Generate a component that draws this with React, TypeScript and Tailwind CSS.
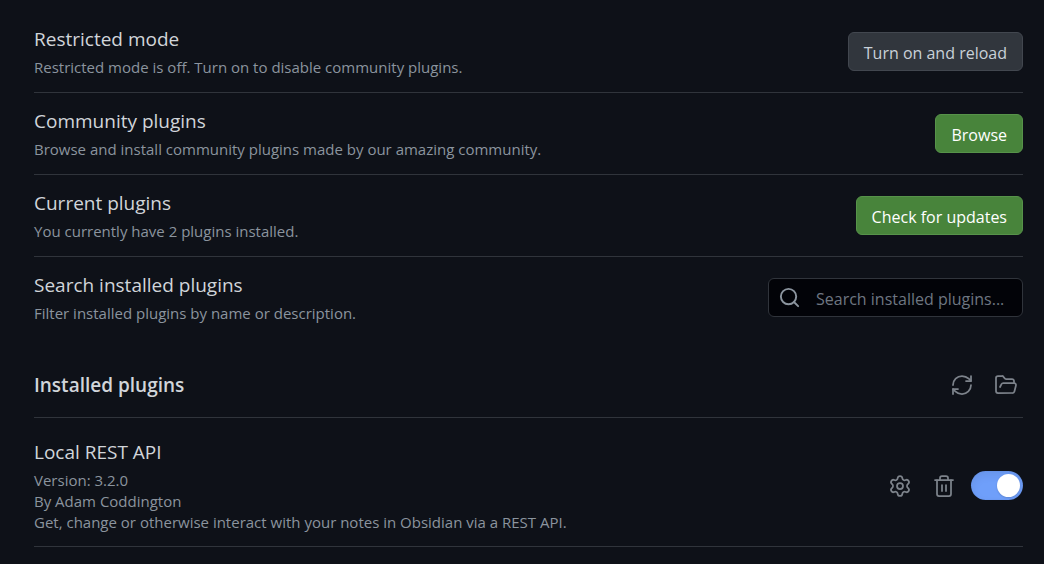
import { useState, type ReactNode } from "react";
import { FolderOpen, RefreshCw, Search, Settings } from "lucide-react";

function Trash() {
  return (
    <svg
      className="size-6"
      viewBox="0 0 24 24"
      fill="none"
      stroke="currentColor"
      strokeWidth="1.75"
      strokeLinecap="round"
      strokeLinejoin="round"
      aria-hidden="true"
    >
      <path d="M3 6h18" />
      <path d="M19 6v14c0 1-1 2-2 2H7c-1 0-2-1-2-2V6" />
      <path d="M8 6V4c0-1 1-2 2-2h4c1 0 2 1 2 2v2" />
      <path d="M10 11v6M14 11v6" />
    </svg>
  );
}

type SettingProps = { title: ReactNode; description: ReactNode; children: ReactNode };

function Setting({ title, description, children }: SettingProps) {
  return (
    <section className="flex items-center justify-between gap-4">
      <div className="min-w-0">
        <h3 className="text-[19px] leading-[28px] text-[#d1d5da]">{title}</h3>
        <div className="mt-1 text-[15px] leading-[21px] text-[#8b949e]">{description}</div>
      </div>
      <div className="flex shrink-0 items-center">{children}</div>
    </section>
  );
}

function ActionButton({ children }: { children: ReactNode }) {
  return (
    <button
      type="button"
      className="h-[39px] rounded-md border border-[#57934a] bg-[#48843b] px-[15px] pt-0.5 text-[16px] text-white"
    >
      {children}
    </button>
  );
}

function IconButton({ label, children }: { label: string; children: ReactNode }) {
  return (
    <button type="button" aria-label={label} className="flex h-8 w-[34px] items-center justify-center text-[#7d838b]">
      {children}
    </button>
  );
}

export default function App() {
  const [query, setQuery] = useState("");
  const [enabled, setEnabled] = useState(true);

  return (
    <main className="min-h-screen bg-[#0e1118] pr-[21px] pl-[34px] font-['Open_Sans','Noto_Sans',sans-serif]">
      <div className="divide-y divide-[#30343b]">
        <div className="pt-[25px] pb-[14px]">
          <Setting
            title="Restricted mode"
            description="Restricted mode is off. Turn on to disable community plugins."
          >
            <button
              type="button"
              className="h-[39px] rounded-md border border-[#42474f] bg-[#31363d] px-[15px] pt-0.5 text-[16px] text-[#c9d1d9]"
            >
              Turn on and reload
            </button>
          </Setting>
        </div>
        <div className="py-[14px]">
          <Setting
            title="Community plugins"
            description="Browse and install community plugins made by our amazing community."
          >
            <ActionButton>Browse</ActionButton>
          </Setting>
        </div>
        <div className="py-[14px]">
          <Setting title="Current plugins" description="You currently have 2 plugins installed.">
            <ActionButton>Check for updates</ActionButton>
          </Setting>
        </div>
        <div className="py-[14px]">
          <Setting
            title={<label htmlFor="plugin-search">Search installed plugins</label>}
            description="Filter installed plugins by name or description."
          >
            <div className="flex h-[39px] w-[255px] items-center gap-[15px] rounded-md border border-[#30343b] bg-[#020308] pr-2 pl-[9px]">
              <Search className="size-[23px] shrink-0 text-[#8b949e]" strokeWidth={2} aria-hidden="true" />
              <input
                id="plugin-search"
                type="text"
                value={query}
                onChange={(event) => setQuery(event.target.value)}
                placeholder="Search installed plugins..."
                className="min-w-0 flex-1 bg-transparent pt-0.5 text-[16px] text-[#c9d1d9] outline-none placeholder:text-[#6e7681]"
              />
            </div>
          </Setting>
        </div>
      </div>

      <header className="flex items-center justify-between border-b border-[#30343b] pt-[31px] pb-4">
        <h2 className="text-[19px] leading-[28px] font-semibold text-[#d1d5da]">Installed plugins</h2>
        <div className="flex items-center gap-2.5">
          <IconButton label="Reload plugins">
            <RefreshCw className="size-6" strokeWidth={1.75} />
          </IconButton>
          <IconButton label="Open plugins folder">
            <FolderOpen className="size-6" strokeWidth={1.75} />
          </IconButton>
        </div>
      </header>

      <div className="border-b border-[#30343b] pt-5 pb-[13px]">
        <Setting
          title="Local REST API"
          description={
            <>
              <p>Version: 3.2.0</p>
              <p>By Adam Coddington</p>
              <p>Get, change or otherwise interact with your notes in Obsidian via a REST API.</p>
            </>
          }
        >
          <div className="flex items-center gap-2.5">
            <IconButton label="Options">
              <Settings className="size-6" strokeWidth={1.75} />
            </IconButton>
            <IconButton label="Uninstall">
              <Trash />
            </IconButton>
            <input
              type="checkbox"
              role="switch"
              aria-label="Enable Local REST API"
              checked={enabled}
              onChange={(event) => setEnabled(event.target.checked)}
              className="flex h-[29px] w-[52px] cursor-pointer appearance-none items-center rounded-full bg-[#484f58] px-[3px] shadow-[inset_0_4px_10px_rgba(0,0,0,0.07),inset_0_0_1px_rgba(0,0,0,0.21)] before:size-[23px] before:rounded-full before:bg-white before:shadow-[0_1px_2px_rgba(0,0,0,0.15)] before:content-[''] checked:justify-end checked:bg-[#6f9ffa]"
            />
          </div>
        </Setting>
      </div>
    </main>
  );
}
